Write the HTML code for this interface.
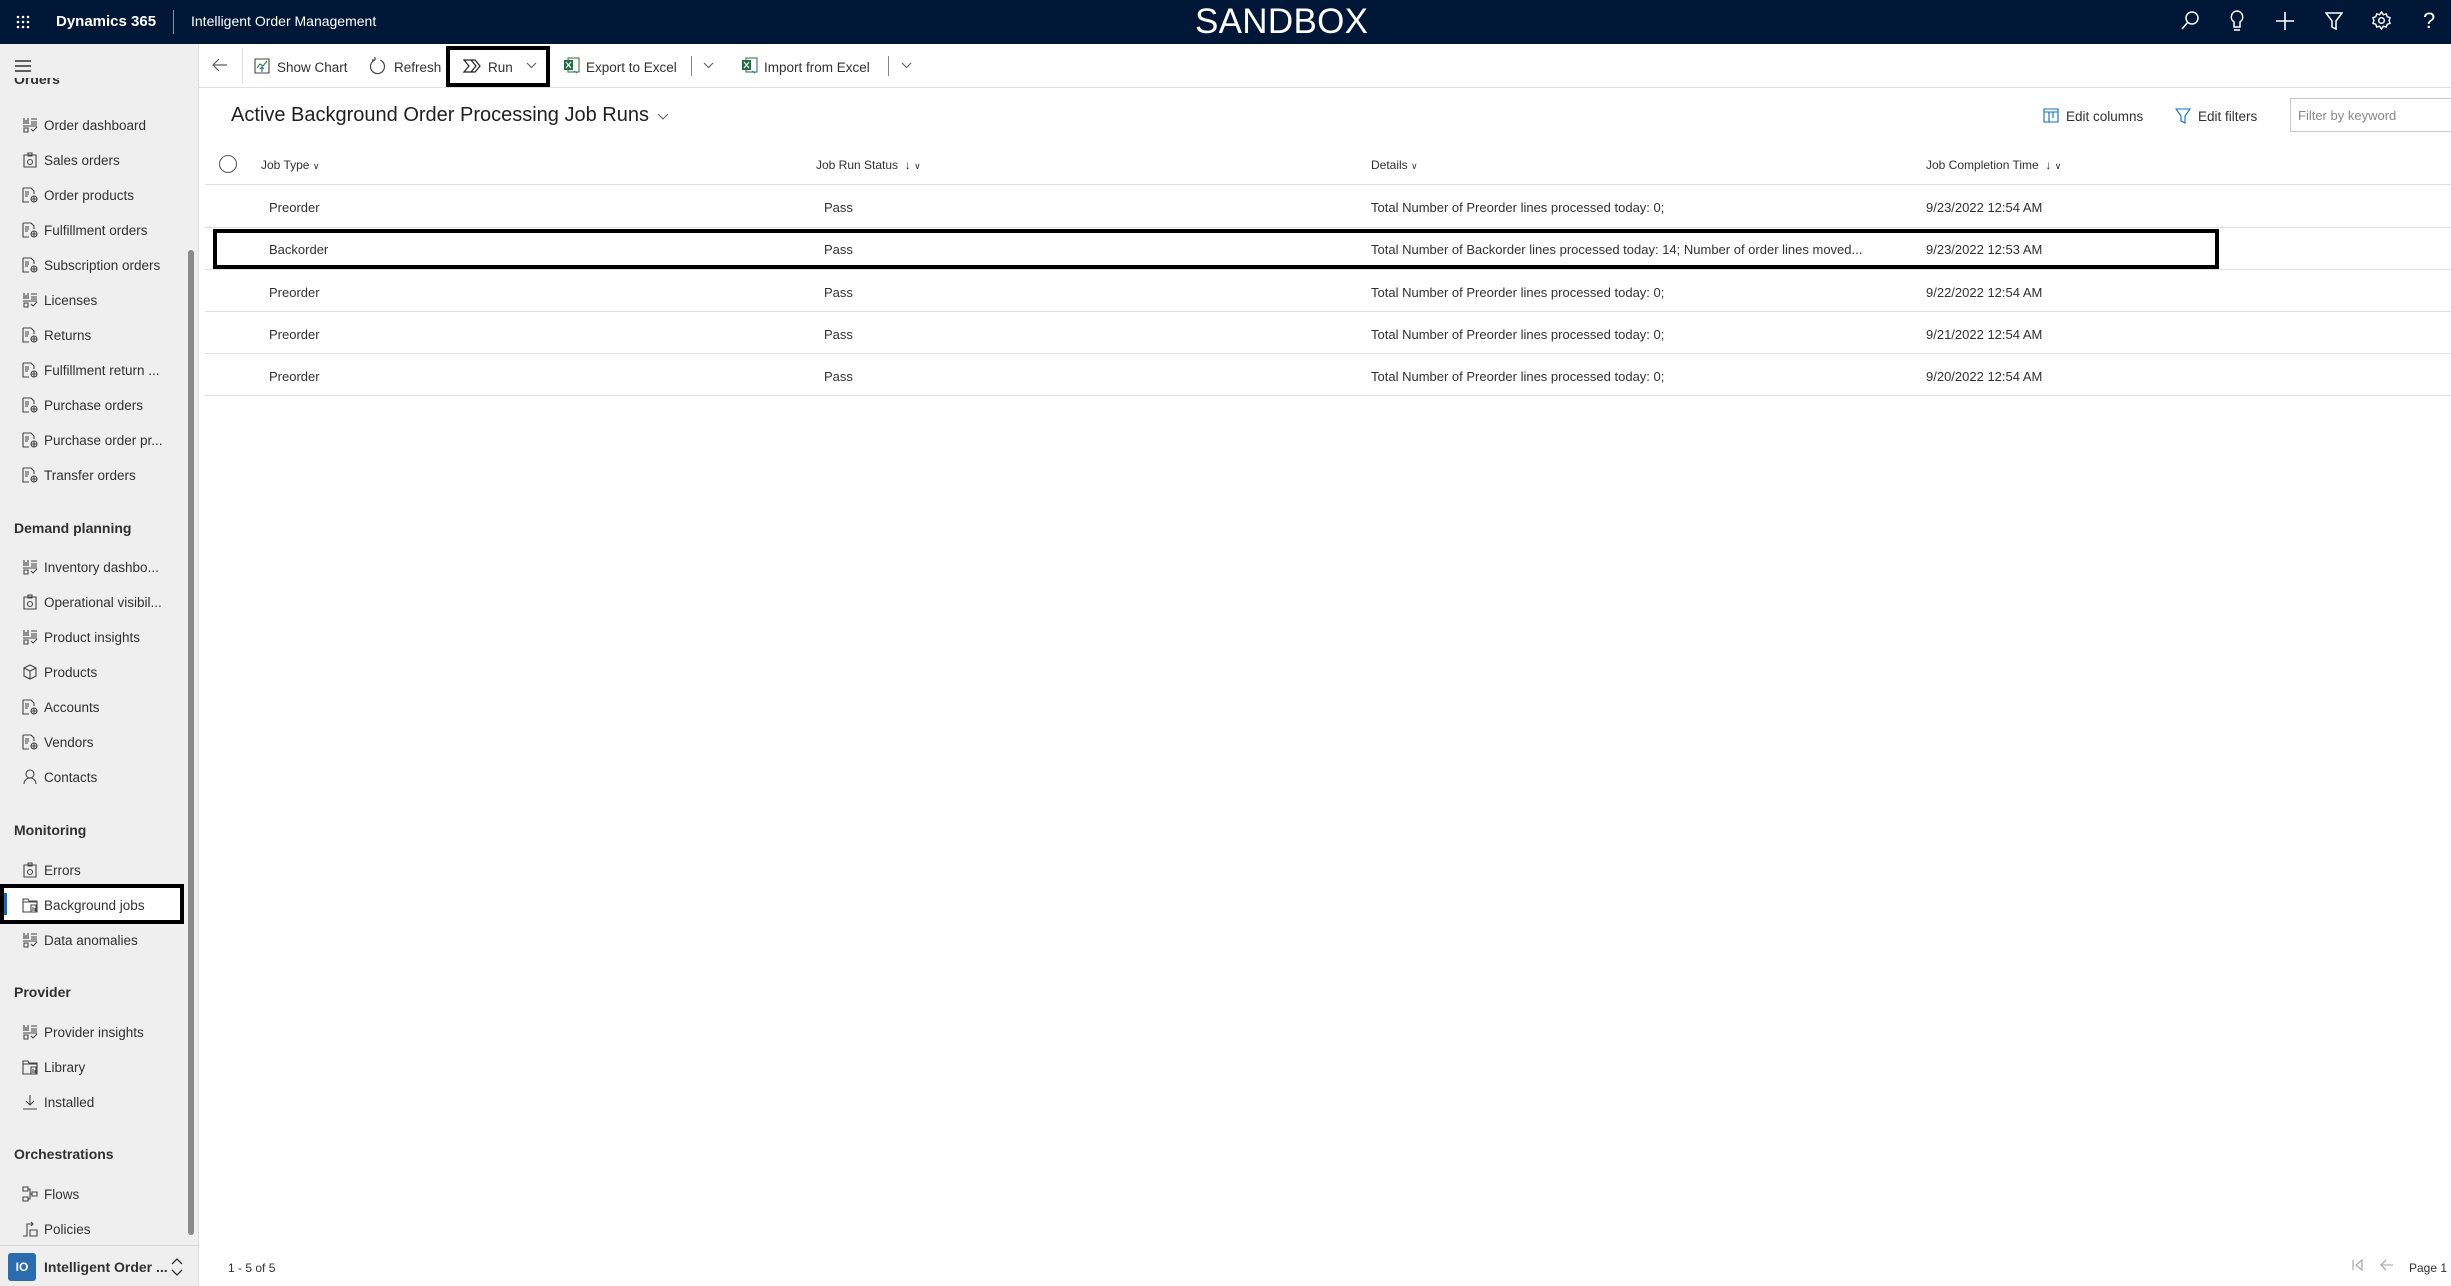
<!DOCTYPE html>
<html><head><meta charset="utf-8"><style>
*{box-sizing:border-box;margin:0;padding:0}
body{width:2451px;height:1286px;overflow:hidden;background:#fff;font-family:"Liberation Sans",sans-serif;color:#323130;position:relative}
.a{position:absolute;white-space:nowrap}
#top{position:absolute;left:0;top:0;width:2451px;height:44px;background:#001738;color:#fff}
#side{position:absolute;left:0;top:44px;width:199px;height:1242px;background:#efefef;border-right:1px solid #e1dfdd}
.ni{position:absolute;left:44px;font-size:13.5px;color:#323130;margin-top:2px}
.ic{position:absolute;left:22px;width:16px;height:16px}
.sh{position:absolute;left:14px;font-size:14px;font-weight:bold;color:#323130}
.cb{font-size:13.5px;color:#323130;margin-top:2px}
.hd{font-size:12px;color:#323130;top:158px}
.rt{font-size:13px;color:#323130;margin-top:2px}
.hl{position:absolute;left:205px;right:0;height:1px;background:#e1dfdd}
</style></head><body>
<div id="top">
 <svg class="a" style="left:16px;top:15px" width="14" height="14" viewBox="0 0 14 14" fill="#fff"><circle cx="2" cy="2" r="1.3"/><circle cx="7" cy="2" r="1.3"/><circle cx="12" cy="2" r="1.3"/><circle cx="2" cy="7" r="1.3"/><circle cx="7" cy="7" r="1.3"/><circle cx="12" cy="7" r="1.3"/><circle cx="2" cy="12" r="1.3"/><circle cx="7" cy="12" r="1.3"/><circle cx="12" cy="12" r="1.3"/></svg>
 <div class="a" style="left:56px;top:13px;font-size:15px;font-weight:bold">Dynamics 365</div>
 <div class="a" style="left:173px;top:10px;width:1px;height:24px;background:#8a94a8"></div>
 <div class="a" style="left:191px;top:13px;font-size:14px">Intelligent Order Management</div>
 <div class="a" style="left:1195px;top:2px;font-size:35px;letter-spacing:0.3px">SANDBOX</div>
 <svg class="a" style="left:2180px;top:10px" width="20" height="22" viewBox="0 0 20 22" fill="none" stroke="#fff" stroke-width="1.5"><circle cx="12" cy="8" r="6"/><path d="M8 12L2 19"/></svg>
 <svg class="a" style="left:2229px;top:9px" width="16" height="24" viewBox="0 0 16 24" fill="none" stroke="#fff" stroke-width="1.5"><path d="M8 2a6 6 0 0 0-3 11v5h6v-5A6 6 0 0 0 8 2zM5 21h6"/></svg>
 <svg class="a" style="left:2275px;top:11px" width="20" height="20" viewBox="0 0 20 20" stroke="#fff" stroke-width="1.6"><path d="M10 1v18M1 10h18"/></svg>
 <svg class="a" style="left:2325px;top:11px" width="18" height="20" viewBox="0 0 18 20" fill="none" stroke="#fff" stroke-width="1.5"><path d="M1 2h16l-6 8v8l-4-2v-6z"/></svg>
 <svg class="a" style="left:2372px;top:11px" width="19" height="19" viewBox="0 0 20 20" fill="none" stroke="#fff" stroke-width="1.5"><circle cx="10" cy="10" r="3"/><path d="M10 1l2 3 3-1 1 3 3 1-1 3 1 3-3 1-1 3-3-1-2 3-2-3-3 1-1-3-3-1 1-3-1-3 3-1 1-3 3 1z"/></svg>
 <div class="a" style="left:2423px;top:8px;font-size:22px;color:#fff">?</div>
</div>

<div id="side">
 <svg class="a" style="left:15px;top:16px" width="16" height="12" viewBox="0 0 16 12" stroke="#323130" stroke-width="1.4"><path d="M0 1h16M0 6h16M0 11h16"/></svg>
 <div class="a" style="left:14px;top:34px;font-size:14px;font-weight:bold;height:10px;overflow:hidden;line-height:2px;color:#323130">Orders</div>
 <div class="a" style="left:188px;top:206px;width:6px;height:985px;background:#8a8a8a;border-radius:3px"></div>
</div>

<div class="ni a" style="top:116px">Order dashboard</div>
<div class="ni a" style="top:151px">Sales orders</div>
<div class="ni a" style="top:186px">Order products</div>
<div class="ni a" style="top:221px">Fulfillment orders</div>
<div class="ni a" style="top:256px">Subscription orders</div>
<div class="ni a" style="top:291px">Licenses</div>
<div class="ni a" style="top:326px">Returns</div>
<div class="ni a" style="top:361px">Fulfillment return ...</div>
<div class="ni a" style="top:396px">Purchase orders</div>
<div class="ni a" style="top:431px">Purchase order pr...</div>
<div class="ni a" style="top:466px">Transfer orders</div>
<div class="sh a" style="top:520px">Demand planning</div>
<div class="ni a" style="top:558px">Inventory dashbo...</div>
<div class="ni a" style="top:593px">Operational visibil...</div>
<div class="ni a" style="top:628px">Product insights</div>
<div class="ni a" style="top:663px">Products</div>
<div class="ni a" style="top:698px">Accounts</div>
<div class="ni a" style="top:733px">Vendors</div>
<div class="ni a" style="top:768px">Contacts</div>
<div class="sh a" style="top:822px">Monitoring</div>
<div class="ni a" style="top:861px">Errors</div>
<div class="a" style="left:0;top:884px;width:184px;height:40px;border:4px solid #000;background:#fff"></div>
<div class="a" style="left:4px;top:893px;width:3px;height:22px;background:#0f6cbd"></div>
<div class="ni a" style="top:896px">Background jobs</div>
<div class="ni a" style="top:931px">Data anomalies</div>
<div class="sh a" style="top:984px">Provider</div>
<div class="ni a" style="top:1023px">Provider insights</div>
<div class="ni a" style="top:1058px">Library</div>
<div class="ni a" style="top:1093px">Installed</div>
<div class="sh a" style="top:1146px">Orchestrations</div>
<div class="ni a" style="top:1185px">Flows</div>
<div class="ni a" style="top:1220px">Policies</div>
<div class="a" style="left:0;top:1245px;width:199px;height:1px;background:#d6d6d6"></div>
<div class="a" style="left:8px;top:1253px;width:28px;height:28px;background:#2b6cb0;border-radius:3px;color:#fff;font-size:12px;font-weight:bold;text-align:center;line-height:28px">IO</div>
<div class="a" style="left:44px;top:1259px;font-size:14px;font-weight:bold;color:#323130">Intelligent Order ...</div>
<svg class="a" style="left:170px;top:1257px" width="14" height="20" viewBox="0 0 14 20" fill="none" stroke="#323130" stroke-width="1.3"><path d="M2 7l5-5 5 5M2 13l5 5 5-5"/></svg>

<svg width="0" height="0" style="position:absolute"><defs>
<g id="doc" fill="none" stroke="#444" stroke-width="1.1"><path d="M1 1h8l3 3v3M1 1v14h6"/><path d="M3 5h4M3 7h4M3 9h3"/><circle cx="12" cy="12" r="3"/><path d="M9 12h6M12 9v6"/></g>
<g id="grd" fill="none" stroke="#444" stroke-width="1.1"><path d="M2 1v6M4 3v4M6 1v6M9 2h6M9 5h6M9 7h6M1 9h14M2 11h4v4H2zM9 12l2 2 4-4"/></g>
<g id="clip" fill="none" stroke="#444" stroke-width="1.1"><path d="M2 3h12v12H2zM6 1h4v3H6z"/><circle cx="8" cy="10" r="2.5"/></g>
<g id="lib" fill="none" stroke="#444" stroke-width="1.1"><path d="M1 2h5l1 2h8v11H1z M1 5h14"/><path d="M9 8h5v7H9zM11 10v4M13 11v3"/></g>
</defs></svg>
<svg class="ic a" style="top:117px"><use href="#grd"/></svg>
<svg class="ic a" style="top:152px"><use href="#clip"/></svg>
<svg class="ic a" style="top:187px"><use href="#doc"/></svg>
<svg class="ic a" style="top:222px"><use href="#doc"/></svg>
<svg class="ic a" style="top:257px"><use href="#doc"/></svg>
<svg class="ic a" style="top:292px"><use href="#grd"/></svg>
<svg class="ic a" style="top:327px"><use href="#doc"/></svg>
<svg class="ic a" style="top:362px"><use href="#doc"/></svg>
<svg class="ic a" style="top:397px"><use href="#doc"/></svg>
<svg class="ic a" style="top:432px"><use href="#doc"/></svg>
<svg class="ic a" style="top:467px"><use href="#doc"/></svg>
<svg class="ic a" style="top:559px"><use href="#grd"/></svg>
<svg class="ic a" style="top:594px"><use href="#clip"/></svg>
<svg class="ic a" style="top:629px"><use href="#grd"/></svg>
<svg class="ic a" style="top:664px" viewBox="0 0 16 16" fill="none" stroke="#444" stroke-width="1.1"><path d="M8 1l6 3v8l-6 3-6-3V4zM2 4l6 3 6-3M8 7v8"/></svg>
<svg class="ic a" style="top:699px"><use href="#doc"/></svg>
<svg class="ic a" style="top:734px"><use href="#doc"/></svg>
<svg class="ic a" style="top:769px" viewBox="0 0 16 16" fill="none" stroke="#444" stroke-width="1.1"><circle cx="8" cy="5" r="4"/><path d="M2 15a6 6 0 0 1 12 0"/></svg>
<svg class="ic a" style="top:862px"><use href="#clip"/></svg>
<svg class="ic a" style="top:897px"><use href="#lib"/></svg>
<svg class="ic a" style="top:932px"><use href="#grd"/></svg>
<svg class="ic a" style="top:1024px"><use href="#grd"/></svg>
<svg class="ic a" style="top:1059px"><use href="#lib"/></svg>
<svg class="ic a" style="top:1094px" viewBox="0 0 16 16" fill="none" stroke="#444" stroke-width="1.1"><path d="M8 1v10M4 7l4 4 4-4M1 15h14"/></svg>
<svg class="ic a" style="top:1186px" viewBox="0 0 16 16" fill="none" stroke="#444" stroke-width="1.1"><path d="M1 1h5v4H1zM10 6h5v4h-5zM1 11h5v4H1zM6 3h2v10H6M8 8h2"/></svg>
<svg class="ic a" style="top:1221px" viewBox="0 0 16 16" fill="none" stroke="#444" stroke-width="1.1"><path d="M1 15h4V3h6M9 1l2 2-2 2M8 9h7v6H8z"/></svg>

<div class="a" style="left:199px;top:87px;width:2252px;height:1px;background:#e1dfdd"></div>
<svg class="a" style="left:212px;top:58px" width="16" height="14" viewBox="0 0 16 14" fill="none" stroke="#605e5c" stroke-width="1.2"><path d="M15 7H1M7 1L1 7l6 6"/></svg>
<div class="a" style="left:242px;top:48px;width:1px;height:36px;background:#e1dfdd"></div>
<svg class="a" style="left:254px;top:58px" width="16" height="16" viewBox="0 0 16 16" fill="none" stroke="#444" stroke-width="1.1"><path d="M1 1h14v14H1z"/><path d="M3 10l3-4 3 2 4-5" stroke="#2e8540"/><path d="M8 14V9M6 11l2-2 2 2" stroke="#0f6cbd"/></svg>
<div class="a cb" style="left:277px;top:58px">Show Chart</div>
<svg class="a" style="left:370px;top:57px" width="16" height="18" viewBox="0 0 16 18" fill="none" stroke="#444" stroke-width="1.2"><path d="M5 3a7 7 0 1 0 5 0M5 3V0M5 3H2"/></svg>
<div class="a cb" style="left:394px;top:58px">Refresh</div>
<div class="a" style="left:446px;top:46px;width:104px;height:41px;border:4px solid #000"></div>
<svg class="a" style="left:463px;top:59px" width="18" height="14" viewBox="0 0 18 14" fill="none" stroke="#222" stroke-width="1.2"><path d="M1 1h7l5 6-5 6H1l5-6zM8 1h4l5 6-5 6H8"/></svg>
<div class="a cb" style="left:488px;top:58px">Run</div>
<svg class="a" style="left:526px;top:62px" width="11" height="7" viewBox="0 0 11 7" fill="none" stroke="#605e5c" stroke-width="1.1"><path d="M1 1l4.5 4.5L10 1"/></svg>
<svg class="a" style="left:564px;top:57px" width="16" height="17" viewBox="0 0 16 17"><rect x="4" y="1" width="11" height="14" fill="#fff" stroke="#1d6f42"/><rect x="0" y="3" width="9" height="10" fill="#1d6f42"/><path d="M2 5l5 6M7 5l-5 6" stroke="#fff" stroke-width="1.2"/><path d="M10 14l3 2" stroke="#0f6cbd"/></svg>
<div class="a cb" style="left:586px;top:58px">Export to Excel</div>
<div class="a" style="left:691px;top:56px;width:1px;height:20px;background:#8a8886"></div>
<svg class="a" style="left:703px;top:62px" width="11" height="7" viewBox="0 0 11 7" fill="none" stroke="#605e5c" stroke-width="1.1"><path d="M1 1l4.5 4.5L10 1"/></svg>
<svg class="a" style="left:742px;top:57px" width="16" height="17" viewBox="0 0 16 17"><rect x="4" y="1" width="11" height="14" fill="#fff" stroke="#1d6f42"/><rect x="0" y="3" width="9" height="10" fill="#1d6f42"/><path d="M2 5l5 6M7 5l-5 6" stroke="#fff" stroke-width="1.2"/><path d="M10 14l3 2" stroke="#0f6cbd"/></svg>
<div class="a cb" style="left:764px;top:58px">Import from Excel</div>
<div class="a" style="left:888px;top:56px;width:1px;height:20px;background:#8a8886"></div>
<svg class="a" style="left:901px;top:62px" width="11" height="7" viewBox="0 0 11 7" fill="none" stroke="#605e5c" stroke-width="1.1"><path d="M1 1l4.5 4.5L10 1"/></svg>

<div class="a" style="left:231px;top:104px;font-size:20px;color:#201f1e">Active Background Order Processing Job Runs</div>
<svg class="a" style="left:657px;top:113px" width="12" height="8" viewBox="0 0 12 8" fill="none" stroke="#605e5c" stroke-width="1.1"><path d="M1 1l5 5 5-5"/></svg>
<svg class="a" style="left:2043px;top:108px" width="16" height="15" viewBox="0 0 16 15" fill="none" stroke="#0f6cbd" stroke-width="1.1"><path d="M1 1h14v13H1zM1 4h14M6 4v10M10 4v6"/></svg>
<div class="a cb" style="left:2066px;top:107px">Edit columns</div>
<svg class="a" style="left:2175px;top:108px" width="16" height="16" viewBox="0 0 16 16" fill="none" stroke="#0f6cbd" stroke-width="1.1"><path d="M1 1h14l-5 7v7l-4-2V8z"/></svg>
<div class="a cb" style="left:2198px;top:107px">Edit filters</div>
<div class="a" style="left:2290px;top:98px;width:170px;height:34px;border:1px solid #c8c6c4"></div>
<div class="a" style="left:2298px;top:108px;font-size:13px;color:#8a8886">Filter by keyword</div>

<svg class="a" style="left:218px;top:154px" width="20" height="20" viewBox="0 0 20 20" fill="none" stroke="#605e5c" stroke-width="1.1"><circle cx="10" cy="10" r="8.5"/></svg>
<div class="a hd" style="left:261px">Job Type <span style="font-size:9px">&#8744;</span></div>
<div class="a hd" style="left:816px">Job Run Status &nbsp;&#8595; <span style="font-size:9px">&#8744;</span></div>
<div class="a hd" style="left:1371px">Details <span style="font-size:9px">&#8744;</span></div>
<div class="a hd" style="left:1926px">Job Completion Time &nbsp;&#8595; <span style="font-size:9px">&#8744;</span></div>
<div class="hl" style="top:184px"></div>

<div class="a rt" style="left:269px;top:198px">Preorder</div><div class="a rt" style="left:824px;top:198px">Pass</div><div class="a rt" style="left:1371px;top:198px">Total Number of Preorder lines processed today: 0;</div><div class="a rt" style="left:1926px;top:198px">9/23/2022 12:54 AM</div>
<div class="hl" style="top:227px"></div>
<div class="a rt" style="left:269px;top:240px">Backorder</div><div class="a rt" style="left:824px;top:240px">Pass</div><div class="a rt" style="left:1371px;top:240px">Total Number of Backorder lines processed today: 14; Number of order lines moved...</div><div class="a rt" style="left:1926px;top:240px">9/23/2022 12:53 AM</div>
<div class="hl" style="top:269px"></div>
<div class="a rt" style="left:269px;top:283px">Preorder</div><div class="a rt" style="left:824px;top:283px">Pass</div><div class="a rt" style="left:1371px;top:283px">Total Number of Preorder lines processed today: 0;</div><div class="a rt" style="left:1926px;top:283px">9/22/2022 12:54 AM</div>
<div class="hl" style="top:311px"></div>
<div class="a rt" style="left:269px;top:325px">Preorder</div><div class="a rt" style="left:824px;top:325px">Pass</div><div class="a rt" style="left:1371px;top:325px">Total Number of Preorder lines processed today: 0;</div><div class="a rt" style="left:1926px;top:325px">9/21/2022 12:54 AM</div>
<div class="hl" style="top:353px"></div>
<div class="a rt" style="left:269px;top:367px">Preorder</div><div class="a rt" style="left:824px;top:367px">Pass</div><div class="a rt" style="left:1371px;top:367px">Total Number of Preorder lines processed today: 0;</div><div class="a rt" style="left:1926px;top:367px">9/20/2022 12:54 AM</div>
<div class="hl" style="top:395px"></div>
<div class="a" style="left:213px;top:229px;width:2006px;height:40px;border:4px solid #000"></div>

<div class="a" style="left:228px;top:1261px;font-size:12px;color:#323130">1 - 5 of 5</div>
<svg class="a" style="left:2352px;top:1259px" width="12" height="12" viewBox="0 0 12 12" fill="none" stroke="#a19f9d" stroke-width="1.1"><path d="M1 1v10M10 1L4 6l6 5z"/></svg>
<svg class="a" style="left:2380px;top:1259px" width="14" height="12" viewBox="0 0 14 12" fill="none" stroke="#a19f9d" stroke-width="1.1"><path d="M13 6H1M6 1L1 6l5 5"/></svg>
<div class="a" style="left:2409px;top:1261px;font-size:12px;color:#323130">Page 1</div>
</body></html>
